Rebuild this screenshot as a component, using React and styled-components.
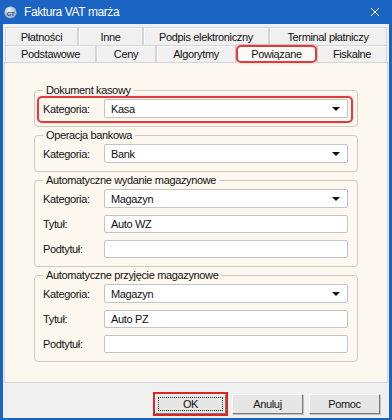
import React from 'react';
import styled, { createGlobalStyle, css } from 'styled-components';

const GlobalStyle = createGlobalStyle`
    html, body {
        margin: 0;
        padding: 0;
        background: #ffffff;
    }
    * {
        box-sizing: border-box;
    }
`;

const Window = styled.div`
    width: 392px;
    height: 420px;
    display: flex;
    flex-direction: column;
    background: #1c64c4;
    font-family: "Liberation Sans", Arial, sans-serif;
    font-size: 11px;
    letter-spacing: -0.35px;
    color: #111;
`;

const TitleBar = styled.div`
    height: 24px;
    display: flex;
    align-items: center;
    padding: 0 12px 0 4px;
    color: #fff;
`;

const TitleText = styled.span`
    flex: 1;
    margin-left: 7px;
    font-size: 12px;
    letter-spacing: -0.4px;
`;

const Body = styled.div`
    flex: 1;
    display: flex;
    flex-direction: column;
    margin: 0 3px 2px 3px;
    background: #f0f0f0;
`;

const TabStrip = styled.div`
    padding: 3px 2px 0 2px;
    display: flex;
    flex-direction: column;
`;

const TabRow = styled.div`
    display: flex;
    height: ${p => p.$h}px;
`;

const Tab = styled.div`
    width: ${p => p.$w}px;
    display: flex;
    align-items: center;
    justify-content: center;
    background: #f0f0f0;
    border: 1px solid #d5d5d5;
    border-bottom: none;
    box-shadow: inset 1px 1px 0 #fafafa;
    ${p => p.$active && css`
        position: relative;
        z-index: 2;
        margin-top: -1px;
        height: calc(100% + 2px);
        background: #fbfbf9;
        &::after {
            content: '';
            position: absolute;
            inset: 0 -1px 0 -1px;
            border: 2px solid #e43a3a;
            border-radius: 5px;
            box-shadow: 0 0 2px rgba(0, 0, 0, 0.25);
        }
    `}
`;

const Panel = styled.div`
    flex: 1;
    margin: 0 1px;
    background: #fcf8ef;
    border: 1px solid #d5d5d5;
    padding: 20px 29px 0 29px;
    display: flex;
    flex-direction: column;
    gap: 1px;
`;

const Group = styled.fieldset`
    margin: 0;
    min-width: 0;
    border: 1px solid #cdcbc2;
    border-radius: 4px;
    padding: 2px 9px 8px 8px;
    display: flex;
    flex-direction: column;
    gap: 6px;
`;

const Legend = styled.legend`
    padding: 0 3px;
    line-height: 14px;
    font-size: 11px;
`;

const Row = styled.div`
    display: grid;
    grid-template-columns: 61px 1fr;
    align-items: center;
    height: 19px;
    ${p => p.$marked && css`
        position: relative;
        &::after {
            content: '';
            position: absolute;
            left: -6px;
            right: -5px;
            top: -3px;
            bottom: -5px;
            border: 2px solid #e43a3a;
            border-radius: 5px;
            box-shadow: 0 0 2px rgba(0, 0, 0, 0.2);
        }
    `}
`;

const Field = styled.div`
    height: ${p => p.$h || 19}px;
    display: flex;
    align-items: center;
    padding: 0 6px;
    background: #fff;
    border: 1px solid #c4c4c4;
    border-radius: 2px;
`;

const FieldText = styled.span`
    flex: 1;
`;

const Arrow = styled.span`
    width: 0;
    height: 0;
    margin-right: 1px;
    border-left: 4px solid transparent;
    border-right: 4px solid transparent;
    border-top: 4px solid #111;
`;

const ButtonBar = styled.div`
    height: 35px;
    display: flex;
    justify-content: flex-end;
    align-items: flex-start;
    gap: 6px;
    padding: 11px 9px 0 0;
`;

const Button = styled.div`
    width: 71px;
    height: 20px;
    display: flex;
    align-items: center;
    justify-content: center;
    background: #e6e6e6;
    border: 1px solid;
    border-color: #f8f8f8 #7a7a7a #7a7a7a #f8f8f8;
    box-shadow: 1px 1px 0 #c0c0c0;
    ${p => p.$default && css`
        position: relative;
        outline: 2px solid #e02424;
        outline-offset: 0;
        &::before {
            content: '';
            position: absolute;
            inset: 2px;
            border: 1px dotted #333;
        }
    `}
`;

function AppIcon() {
    return <svg width="13" height="13" viewBox="0 0 12 12">
        <defs>
            <radialGradient id="ic" cx="0.4" cy="0.3" r="0.8">
                <stop offset="0" stopColor="#eef4fa" />
                <stop offset="1" stopColor="#7f9bb8" />
            </radialGradient>
        </defs>
        <circle cx="6" cy="6" r="5.6" fill="url(#ic)" />
        <text x="6" y="9" textAnchor="middle" fontSize="5.5" fontWeight="700"
            fontFamily="Liberation Sans, sans-serif" fill="#27507e">GT</text>
    </svg>;
}

function CloseIcon() {
    return <svg width="10" height="10" viewBox="0 0 10 10">
        <path d="M1 1 L9 9 M9 1 L1 9" stroke="#fff" strokeWidth="1" />
    </svg>;
}

function Combo({ value }) {
    return <Field>
        <FieldText>{ value }</FieldText>
        <Arrow />
    </Field>;
}

const topTabs = [
    { label: 'Płatności', w: 73 },
    { label: 'Inne', w: 65 },
    { label: 'Podpis elektroniczny', w: 126 },
    { label: 'Terminal płatniczy', w: 118 },
];

const bottomTabs = [
    { label: 'Podstawowe', w: 91 },
    { label: 'Ceny', w: 60 },
    { label: 'Algorytmy', w: 80 },
    { label: 'Powiązane', w: 81, active: true },
    { label: 'Fiskalne', w: 70 },
];

function StockGroup({ title, category, docTitle }) {
    return <Group>
        <Legend>{ title }</Legend>
        <Row>
            <span>Kategoria:</span>
            <Combo value={ category } />
        </Row>
        <Row>
            <span>Tytuł:</span>
            <Field $h={ 18 }><FieldText>{ docTitle }</FieldText></Field>
        </Row>
        <Row>
            <span>Podtytuł:</span>
            <Field $h={ 18 } />
        </Row>
    </Group>;
}

export default function App() {
    return <>
        <GlobalStyle />
        <Window>
            <TitleBar>
                <AppIcon />
                <TitleText>Faktura VAT marża</TitleText>
                <CloseIcon />
            </TitleBar>
            <Body>
                <TabStrip>
                    <TabRow $h={ 18 }>
                        { topTabs.map(t => <Tab key={ t.label } $w={ t.w }>{ t.label }</Tab>) }
                    </TabRow>
                    <TabRow $h={ 17 }>
                        { bottomTabs.map(t =>
                            <Tab key={ t.label } $w={ t.w } $active={ t.active }>{ t.label }</Tab>) }
                    </TabRow>
                </TabStrip>
                <Panel>
                    <Group>
                        <Legend>Dokument kasowy</Legend>
                        <Row $marked>
                            <span>Kategoria:</span>
                            <Combo value="Kasa" />
                        </Row>
                    </Group>
                    <Group>
                        <Legend>Operacja bankowa</Legend>
                        <Row>
                            <span>Kategoria:</span>
                            <Combo value="Bank" />
                        </Row>
                    </Group>
                    <StockGroup title="Automatyczne wydanie magazynowe" category="Magazyn" docTitle="Auto WZ" />
                    <StockGroup title="Automatyczne przyjęcie magazynowe" category="Magazyn" docTitle="Auto PZ" />
                </Panel>
                <ButtonBar>
                    <Button $default>OK</Button>
                    <Button>Anuluj</Button>
                    <Button>Pomoc</Button>
                </ButtonBar>
            </Body>
        </Window>
    </>;
}
